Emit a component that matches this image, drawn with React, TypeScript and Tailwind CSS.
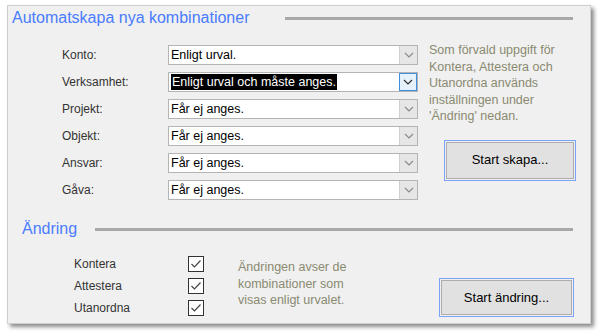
import React from "react";

const font = { fontFamily: '"Liberation Sans", Arial, sans-serif' };

function Chevron({ color = "#606060" }: { color?: string }) {
  return (
    <svg width="10" height="6" viewBox="0 0 10 6">
      <path d="M1 1 L5 5 L9 1" fill="none" stroke={color} strokeWidth="1.2" />
    </svg>
  );
}

function Combo({ text, active }: { text: string; active?: boolean }) {
  return (
    <div className="flex h-[20px] w-[250px] border border-[#b4b4b4] bg-white">
      <div className="flex flex-1 items-center pl-[2px] text-[12.5px] text-black">
        {active ? (
          <span className="bg-black px-[1px] leading-[16px] text-white">{text}</span>
        ) : (
          <span className="leading-[16px]">{text}</span>
        )}
      </div>
      {active ? (
        <div className="flex w-[18px] items-center justify-center border border-[#3c8ee0] bg-[#e5f1fb]">
          <Chevron color="#303030" />
        </div>
      ) : (
        <div className="flex w-[18px] items-center justify-center border-l border-[#d0d0d0] bg-[#e6e6e6]">
          <Chevron color="#8a8a8a" />
        </div>
      )}
    </div>
  );
}

function Check() {
  return (
    <div className="flex h-[16px] w-[16px] items-center justify-center border border-[#333] bg-white">
      <svg width="12" height="10" viewBox="0 0 12 10">
        <path d="M1.5 5 L4.5 8 L10.5 1.5" fill="none" stroke="#444" strokeWidth="1.2" />
      </svg>
    </div>
  );
}

function Button({ label }: { label: string }) {
  return (
    <div className="h-full w-full border border-[#7aa2f7] p-[1px]">
      <div className="flex h-full w-full items-center justify-center border border-[#adadad] bg-[#e1e1e1] text-[13px] text-black">
        {label}
      </div>
    </div>
  );
}

export default function App() {
  const rows: [string, string, boolean?][] = [
    ["Konto:", "Enligt urval.", false],
    ["Verksamhet:", "Enligt urval och måste anges.", true],
    ["Projekt:", "Får ej anges.", false],
    ["Objekt:", "Får ej anges.", false],
    ["Ansvar:", "Får ej anges.", false],
    ["Gåva:", "Får ej anges.", false],
  ];
  return (
    <div className="h-[336px] w-[603px] bg-white pl-[7px] pt-[5px]" style={font}>
      <div className="flex h-[319px] w-[584px] flex-col border border-[#cfcfcf] bg-[#f0f0f0] shadow-[3px_3px_4px_rgba(0,0,0,0.45)]">
        {/* Header 1 */}
        <div className="flex h-[24px] items-center pl-[4px] pr-[17px]">
          <span className="text-[16px] leading-[20px] text-[#4a7cff]">Automatskapa nya kombinationer</span>
          <div className="ml-auto h-[3px] w-[288px] bg-[#a8a8a8]" />
        </div>
        <div className="flex pt-[15px]">
          <div className="flex flex-col gap-[7px] pl-[54px]">
            {rows.map(([l, t, a]) => (
              <div key={l} className="flex h-[20px] items-center">
                <span className="w-[106px] text-[12px] text-[#333]">{l}</span>
                <Combo text={t} active={a} />
              </div>
            ))}
          </div>
          <div className="flex flex-col pl-[11px]">
            <div className="mt-[-3px] w-[150px] text-[12.5px] leading-[16.5px] text-[#8a8a70]">
              Som förvald uppgift för Kontera, Attestera och Utanordna används inställningen under 'Ändring' nedan.
            </div>
            <div className="ml-[15px] mt-[15px] h-[41px] w-[132px]">
              <Button label="Start skapa..." />
            </div>
          </div>
        </div>
        {/* Header 2 */}
        <div className="mt-[17px] flex h-[24px] items-center pl-[14px] pr-[17px]">
          <span className="text-[16px] leading-[20px] text-[#4a7cff]">Ändring</span>
          <div className="ml-auto h-[3px] w-[478px] bg-[#a8a8a8]" />
        </div>
        <div className="flex pt-[15px]">
          <div className="flex flex-col gap-[6px] pl-[66px]">
            {["Kontera", "Attestera", "Utanordna"].map((l) => (
              <div key={l} className="flex h-[16px] items-center">
                <span className="w-[114px] text-[12px] text-[#333]">{l}</span>
                <Check />
              </div>
            ))}
          </div>
          <div className="mt-[3px] pl-[34px] text-[12.5px] leading-[16.5px] text-[#8a8a70]">
            Ändringen avser de
            <br />
            kombinationer som
            <br />
            visas enligt urvalet.
          </div>
          <div className="ml-auto mr-[16px] mt-[22px] h-[39px] w-[135px]">
            <Button label="Start ändring..." />
          </div>
        </div>
      </div>
    </div>
  );
}
